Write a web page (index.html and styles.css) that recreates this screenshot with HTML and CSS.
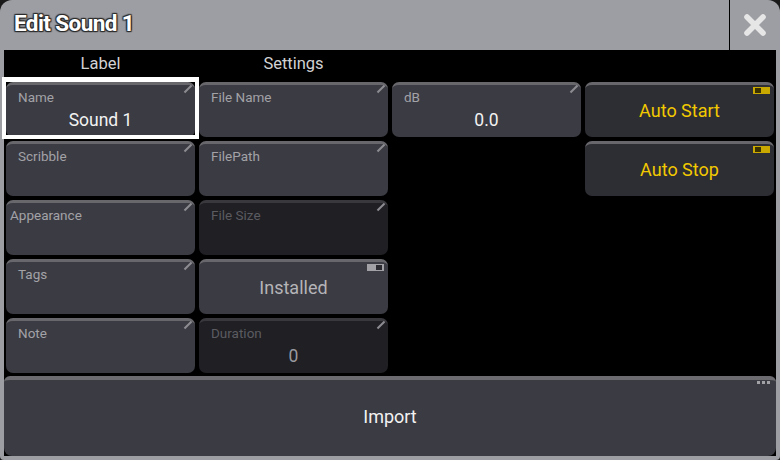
FILE: index.html
```html
<!DOCTYPE html>
<html lang="en">
<head>
  <meta charset="UTF-8">
  <title>Edit Sound 1</title>
  <link rel="stylesheet" href="styles.css">
</head>
<body>
  <div class="window">
    <div class="titlebar">
      <div class="title">Edit Sound 1</div>
      <div class="close">
        <svg width="24" height="24" viewBox="0 0 24 24"><path d="M4 4 L20 20 M20 4 L4 20" stroke="#e6e6e6" stroke-width="5.6" stroke-linecap="round"/></svg>
      </div>
    </div>
    <div class="content">
      <div class="heads">
        <div class="head">Label</div>
        <div class="head">Settings</div>
      </div>
      <div class="grid">
        <div class="btn edit selected c1"><span class="lbl">Name</span><span class="val">Sound 1</span></div>
        <div class="btn edit"><span class="lbl">File Name</span></div>
        <div class="btn edit"><span class="lbl">dB</span><span class="val">0.0</span></div>
        <div class="btn auto"><span class="toggle on"></span>Auto Start</div>

        <div class="btn edit c1"><span class="lbl">Scribble</span></div>
        <div class="btn edit"><span class="lbl">FilePath</span></div>
        <div class="btn auto c4"><span class="toggle on"></span>Auto Stop</div>

        <div class="btn edit c1"><span class="lbl tight">Appearance</span></div>
        <div class="btn edit dim"><span class="lbl">File Size</span></div>

        <div class="btn edit c1"><span class="lbl">Tags</span></div>
        <div class="btn plain"><span class="toggle off"></span>Installed</div>

        <div class="btn edit c1"><span class="lbl">Note</span></div>
        <div class="btn edit dim"><span class="lbl">Duration</span><span class="val">0</span></div>
      </div>
      <div class="import">
        <span class="dots"><i></i><i></i><i></i></span>
        Import
      </div>
    </div>
  </div>
</body>
</html>
```

FILE: styles.css
```css
body {
  margin: 0;
  background-color: #1a1a1a;
  font-family: Roboto, 'Liberation Sans', sans-serif;
}
.window {
  width: 780px;
  height: 460px;
  background-color: #9d9ea3; /* frame grey */
  border-radius: 12px 12px 4px 4px;
  display: flex;
  flex-direction: column;
  overflow: hidden;
}
.titlebar {
  height: 50px;
  display: flex;
  flex-shrink: 0;
}
.title {
  flex: 1;
  padding-left: 14px;
  line-height: 47px;
  font-size: 22.5px;
  font-weight: 700;
  letter-spacing: -0.6px;
  color: #ffffff;
  text-shadow: 0 0 2px #2a2a2a, 1px 1px 1px #2a2a2a, -1px -1px 1px #2a2a2a, 1px -1px 1px #2a2a2a, -1px 1px 1px #2a2a2a;
}
.close {
  width: 50px;
  border-left: 1px solid #000;
  display: flex;
  align-items: center;
  justify-content: center;
  padding-bottom: 1px;
}
.content {
  flex: 1;
  background-color: #000;
  margin: 0 4px 4px;
  display: flex;
  flex-direction: column;
}
.heads {
  height: 32px;
  display: grid;
  grid-template-columns: repeat(4, 189px);
  column-gap: 4px;
  padding: 0 2px;
}
.head {
  color: #d2d2d4;
  font-size: 16.5px;
  text-align: center;
  line-height: 27px;
}
.grid {
  display: grid;
  grid-template-columns: repeat(4, 189px);
  grid-auto-rows: 55px;
  gap: 4px;
  padding: 0 2px;
}
.c1 { grid-column: 1; }
.c4 { grid-column: 4; }
.btn {
  position: relative;
  background-color: #3b3b43;
  border-top: 3px solid #67676c;
  border-radius: 7px;
  box-sizing: border-box;
  display: flex;
  flex-direction: column;
}
.btn.edit::after {
  /* pencil mark: cell is editable */
  content: "";
  position: absolute;
  top: 3px;
  right: 2px;
  width: 10px;
  height: 2px;
  background-color: #8c8c92;
  transform: rotate(-45deg);
}
.lbl {
  color: #a2a2a7;
  font-size: 13.5px;
  line-height: 16px;
  padding: 4px 0 0 12px;
}
.lbl.tight { padding-left: 4px; }
.val {
  color: #f2f2f2;
  font-size: 17.5px;
  line-height: 20px;
  text-align: center;
  margin-top: 5px;
}
.selected::before {
  /* white selection frame, square cornered */
  content: "";
  position: absolute;
  top: -8px;
  left: -4px;
  right: -4px;
  bottom: -2px;
  border: 4px solid #ffffff;
  border-top-width: 5px;
}
.dim {
  background-color: #1f1f24;
  border-top-color: #38383d;
}
.dim .lbl { color: #5b5b60; }
.dim .val { color: #9a9a9e; }
.dim::after { background-color: #55555a; }
.auto, .plain {
  align-items: center;
  justify-content: center;
  font-size: 18px;
  padding-bottom: 1px;
}
.auto {
  background-color: #2d2d34;
  color: #f2c900;
}
.plain {
  color: #b4b4b8;
}
.toggle {
  position: absolute;
  top: 2px;
  right: 4px;
  width: 17px;
  height: 7px;
  box-sizing: border-box;
}
.toggle.on {
  background-color: #c9a900;
  border: 1px solid #c9a900;
  border-left-width: 2px;
}
.toggle.on::before {
  content: "";
  display: block;
  width: 6px;
  height: 5px;
  background-color: #3a3200;
}
.toggle.off {
  background-color: #a2a2a6;
  border: 1px solid #a2a2a6;
  border-right-width: 2px;
}
.toggle.off::before {
  content: "";
  display: block;
  width: 6px;
  height: 5px;
  margin-left: auto;
  background-color: #2a2a30;
}
.import {
  position: relative;
  margin-top: 3px;
  flex: 1;
  background-color: #3b3b43;
  border-top: 4px solid #6b6b70;
  border-radius: 6px 6px 8px 8px;
  display: flex;
  align-items: center;
  justify-content: center;
  color: #f2f2f2;
  font-size: 18px;
  padding-bottom: 3px;
}
.dots {
  position: absolute;
  top: 1px;
  right: 6px;
  display: flex;
  gap: 2px;
}
.dots i {
  width: 3px;
  height: 3px;
  background-color: #a2a2a6;
}
```
